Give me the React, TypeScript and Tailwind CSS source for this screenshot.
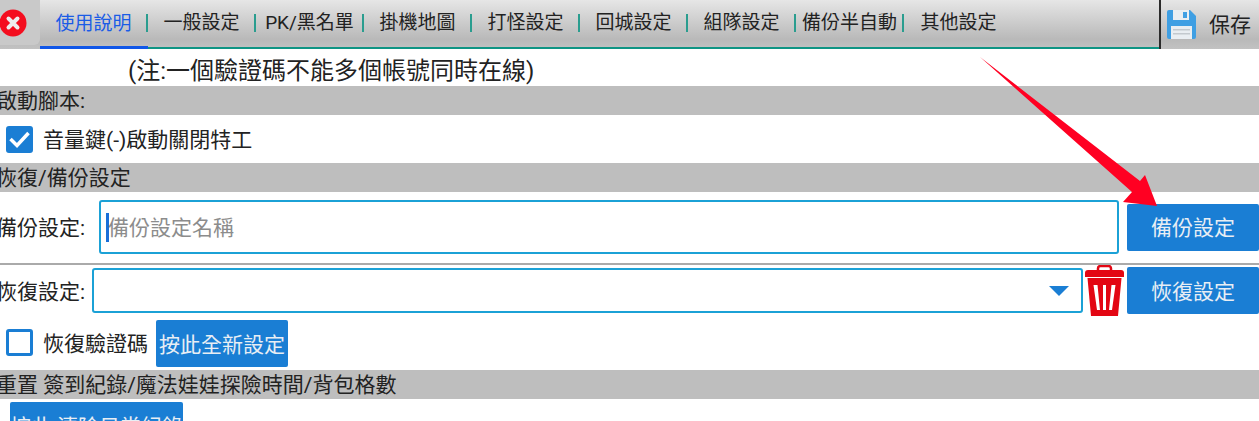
const TABS = ['一般設定', 'PK/黑名單', '掛機地圖', '打怪設定', '回城設定', '組隊設定', '備份半自動', '其他設定'];

const FONT = "font-['Roboto','Noto_Sans_CJK_TC',sans-serif]";

function CloseIcon() {
  return (
    <svg width="28" height="28" viewBox="0 0 28 28">
      <circle cx="14" cy="14" r="13.5" fill="#f40e1f" />
      <path d="M9.5 9.5 L18.5 18.5 M18.5 9.5 L9.5 18.5" stroke="#eee" strokeWidth="4" strokeLinecap="round" />
    </svg>
  );
}

function SaveIcon() {
  return (
    <svg width="29" height="29" viewBox="0 0 29 29">
      <path d="M2 0 H23 L29 6 V27 a2 2 0 0 1 -2 2 H2 a2 2 0 0 1 -2 -2 V2 a2 2 0 0 1 2 -2 Z" fill="#3f9fe3" />
      <rect x="6" y="0" width="16" height="10" fill="#e9eef2" />
      <rect x="16" y="2" width="4" height="6" fill="#3f9fe3" />
      <rect x="4" y="16" width="21" height="13" fill="#e9eef2" />
      <rect x="6" y="19" width="17" height="1.5" fill="#c3c9ce" />
      <rect x="6" y="23" width="17" height="1.5" fill="#c3c9ce" />
    </svg>
  );
}

function TrashIcon() {
  return (
    <svg width="39" height="51" viewBox="0 0 39 51">
      <path d="M13 6 V3.5 a2.5 2.5 0 0 1 2.5 -2.5 H23.5 a2.5 2.5 0 0 1 2.5 2.5 V6" fill="none" stroke="#e30613" strokeWidth="2.5" />
      <path d="M3 5 H36 a3 3 0 0 1 3 3 V12 H0 V8 a3 3 0 0 1 3 -3 Z" fill="#e30613" />
      <path d="M2.5 13 H36.5 L33 51 H6 Z" fill="#e30613" />
      <path d="M8.5 20 L12 45 H15 L12.5 20 Z M18 20 L18 45 H21 L21 20 Z M26.5 20 L24 45 H27 L30.5 20 Z" fill="#fff" />
    </svg>
  );
}

function Checkbox({ checked }: { checked?: boolean }) {
  return (
    <span className={`flex h-[27px] w-[27px] shrink-0 items-center justify-center rounded-[3px] border-[3px] border-[#1a7ed4] ${checked ? 'bg-[#1a7ed4]' : 'bg-white'}`}>
      {checked && (
        <svg width="21" height="17" viewBox="0 0 21 17">
          <path d="M1.5 8 L8 14.5 L19.5 2" fill="none" stroke="#fff" strokeWidth="3.5" />
        </svg>
      )}
    </span>
  );
}

function SectionBar({ children }: { children: string }) {
  return (
    <div className="flex h-[29px] shrink-0 items-center overflow-hidden whitespace-nowrap bg-[#bebebe] pt-[2px] text-[21px] leading-none text-[#222]">
      <span className="-ml-[4px]">{children}</span>
    </div>
  );
}

function BlueButton({ children, className }: { children: string; className: string }) {
  return <button type="button" className={`flex shrink-0 items-center justify-center whitespace-nowrap rounded-[2px] bg-[#1a7ed4] pt-[4px] text-[#e8eef4] ${className}`}>{children}</button>;
}

export default function App() {
  return (
    <div className={`relative flex h-[421px] w-[1259px] flex-col overflow-hidden bg-white ${FONT}`}>
      {/* top bar */}
      <div className="flex h-[49px] shrink-0 bg-gradient-to-b from-[#e6e6e6] via-[#b9b9b9] via-80% to-[#c2c2c2]">
        <div className="flex h-[45px] w-[40px] shrink-0 items-center overflow-hidden rounded-br-[6px] bg-[#c9c9c9]">
          <span className="-ml-[1px]"><CloseIcon /></span>
        </div>
        <div className="flex flex-1 border-b-[2px] border-[#0f9584] pb-[2px]">
          <div className="-mb-[4px] flex h-[49px] w-[108px] shrink-0 items-center justify-center border-b-[3px] border-[#1157e8] text-[19px] text-[#1a5ce6]">
            <span className="flex h-[18px] w-full items-center justify-center border-r-[2px] border-[#2a9d8f] pl-[1px] pt-[2px]">使用說明</span>
          </div>
          {TABS.map((tab, i) => (
            <div key={tab} className={`flex items-center ${i === 7 ? 'flex-1' : 'w-[108px]'} shrink-0`}>
              <span className={`flex h-[18px] w-[108px] items-center justify-center whitespace-nowrap pl-[1px] pt-[2px] text-[19px] text-[#222] ${i < 7 ? 'border-r-[2px] border-[#2a9d8f]' : ''}`}>{tab}</span>
            </div>
          ))}
        </div>
        <div className="flex w-[100px] shrink-0 items-center gap-[13px] rounded-br-[10px] border-l-[2px] border-[#2b2b2b] pl-[6px] text-[21px] text-[#222]">
          <SaveIcon />
          <span className="pt-[2px]">保存</span>
        </div>
      </div>

      {/* note */}
      <div className="flex h-[37px] shrink-0 items-center whitespace-nowrap pl-[128px] pt-[7px] text-[24px] text-[#222]">(注:一個驗證碼不能多個帳號同時在線)</div>

      <SectionBar>啟動腳本:</SectionBar>
      <div className="flex h-[48px] shrink-0 items-center gap-[10px] pl-[6px] text-[21px] text-[#222]">
        <Checkbox checked />
        <span className="pt-[3px]">音量鍵(-)啟動關閉特工</span>
      </div>

      <SectionBar>恢復/備份設定</SectionBar>
      <div className="flex h-[71px] shrink-0 items-center pb-[1px] text-[21px] text-[#222]">
        <span className="flex w-[99px] shrink-0 justify-end whitespace-nowrap pr-[14px] pt-[4px]">備份設定:</span>
        <div className="flex h-[54px] w-[1020px] shrink-0 items-center rounded-[3px] border-[2px] border-[#1ba1d6] pl-[5px] text-[#8c8c8c]">
          <span className="h-[29px] w-[3px] shrink-0 bg-[#1a6fd8]" />
          <span className="-ml-[1px] pt-[3px]">備份設定名稱</span>
        </div>
        <BlueButton className="ml-[8px] h-[47px] w-[132px] text-[21px]">備份設定</BlueButton>
      </div>
      <div className="h-[2px] shrink-0 bg-[#aaaaaa]" />
      <div className="flex h-[55px] shrink-0 items-center pb-[4px] text-[21px] text-[#222]">
        <span className="flex w-[92px] shrink-0 justify-end whitespace-nowrap pr-[7px] pt-[4px]">恢復設定:</span>
        <div className="flex h-[45px] w-[991px] shrink-0 items-center justify-end rounded-[3px] border-[2px] border-[#1ba1d6] pr-[12px]">
          <svg width="20" height="10" viewBox="0 0 20 10"><path d="M0 0 H20 L10 10 Z" fill="#1a7ed4" /></svg>
        </div>
        <span className="ml-[2px] shrink-0"><TrashIcon /></span>
        <BlueButton className="ml-[3px] h-[47px] w-[132px] text-[21px]">恢復設定</BlueButton>
      </div>
      <div className="flex h-[50px] shrink-0 items-start pl-[6px] text-[21px] text-[#222]">
        <span className="mt-[9px]"><Checkbox /></span>
        <span className="ml-[10px] mt-[11px] w-[113px] shrink-0 whitespace-nowrap leading-[27px]">恢復驗證碼</span>
        <BlueButton className="h-[47px] w-[132px] text-[21px]">按此全新設定</BlueButton>
      </div>

      <SectionBar>重置 簽到紀錄/魔法娃娃探險時間/背包格數</SectionBar>
      <div className="pl-[10px] pt-[3px]">
        <BlueButton className="h-[47px] w-[173px] text-[21px]">按此 清除日常紀錄</BlueButton>
      </div>

      {/* annotation arrow */}
      <svg className="pointer-events-none absolute left-0 top-0" width="1259" height="421" viewBox="0 0 1259 421">
        <path d="M980 57 L1140 181 L1145 175 L1157 206 L1123 202 L1132 192 Z" fill="#ff0022" />
      </svg>
    </div>
  );
}
